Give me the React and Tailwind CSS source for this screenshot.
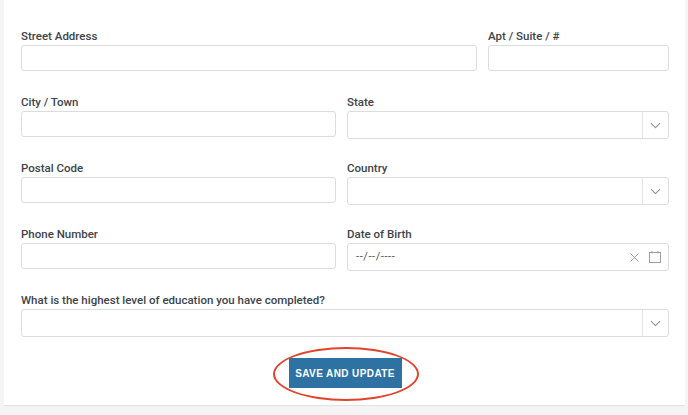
import { ChevronDown, X } from 'lucide-react';

const font = { fontFamily: 'Roboto, "Liberation Sans", Arial, sans-serif' };

function Label({ children }) {
  return <div className="text-[11.5px] leading-[16px] font-medium text-[#3d444b] mb-[1px]">{children}</div>;
}

function TextInput() {
  return <div className="h-[26px] rounded-[3px] border border-[#dcdcdc] bg-white" />;
}

function Select() {
  return (
    <div className="h-[28px] rounded-[3px] border border-[#dcdcdc] bg-white flex justify-end">
      <div className="w-[26px] border-l border-[#e4e4e4] flex items-center justify-center">
        <ChevronDown size={17} strokeWidth={1.5} className="text-[#8d9399]" />
      </div>
    </div>
  );
}

function DateInput() {
  return (
    <div className="h-[28px] rounded-[3px] border border-[#dcdcdc] bg-white flex items-center pl-[8px] pr-[7px]">
      <span className="text-[11px] text-[#4f5458] tracking-[0.6px] flex-1">--/--/----</span>
      <X size={15} strokeWidth={1.4} className="text-[#8a8f94] mr-[7px]" />
      <svg width="12" height="12" viewBox="0 0 12 12">
        <rect x="0.5" y="1.5" width="11" height="10" fill="none" stroke="#9a9ea2" strokeWidth="1" />
        <line x1="3" y1="0" x2="3" y2="2.5" stroke="#9a9ea2" />
        <line x1="9" y1="0" x2="9" y2="2.5" stroke="#9a9ea2" />
      </svg>
    </div>
  );
}

export default function App() {
  return (
    <div className="w-[688px] h-[415px] bg-[#f4f4f4] flex flex-col" style={font}>
      <div className="ml-[4px] mr-[3px] h-[406px] bg-white border-b border-[#e2e2e2] pt-[28px] pl-[17px] pr-[16px]">
        {/* Row 1 */}
        <div className="flex gap-[11px] h-[66px]">
          <div className="w-[456px]">
            <Label>Street Address</Label>
            <TextInput />
          </div>
          <div className="flex-1">
            <Label>Apt / Suite / #</Label>
            <TextInput />
          </div>
        </div>

        <div className="flex gap-[11px] h-[66px]">
          <div className="w-[315px]">
            <Label>City / Town</Label>
            <TextInput />
          </div>
          <div className="flex-1">
            <Label>State</Label>
            <Select />
          </div>
        </div>

        <div className="flex gap-[11px] h-[66px]">
          <div className="w-[315px]">
            <Label>Postal Code</Label>
            <TextInput />
          </div>
          <div className="flex-1">
            <Label>Country</Label>
            <Select />
          </div>
        </div>

        <div className="flex gap-[11px] h-[66px]">
          <div className="w-[315px]">
            <Label>Phone Number</Label>
            <TextInput />
          </div>
          <div className="flex-1">
            <Label>Date of Birth</Label>
            <DateInput />
          </div>
        </div>

        <div>
          <Label>What is the highest level of education you have completed?</Label>
          <Select />
        </div>

        {/* Button */}
        <div className="flex justify-center mt-[21px]">
          <div className="relative">
            <button
              className="w-[113px] h-[30px] bg-[#2d72a3] text-white text-[10px] font-bold tracking-[0.4px]"
              style={{ fontFamily: '"Liberation Sans", Arial, sans-serif' }}
            >
              SAVE AND UPDATE
            </button>
            <div className="absolute left-[-16px] top-[-11px] w-[146px] h-[54px] rounded-[50%] border-2 border-[#e2432c] pointer-events-none" />
          </div>
        </div>
      </div>
    </div>
  );
}
